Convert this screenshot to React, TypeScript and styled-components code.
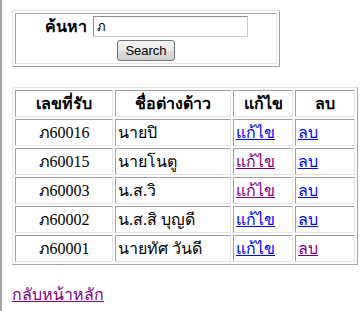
import React from 'react';
import styled, { createGlobalStyle } from 'styled-components';

interface IRow {
  code: string;
  name: string;
  editVisited?: boolean;
  deleteVisited?: boolean;
}

const rows: IRow[] = [
  { code: 'ภ60016', name: 'นายปิ' },
  { code: 'ภ60015', name: 'นายโนตู', editVisited: true },
  { code: 'ภ60003', name: 'น.ส.วิ', editVisited: true },
  { code: 'ภ60002', name: 'น.ส.สิ บุญดี' },
  { code: 'ภ60001', name: 'นายทัศ วันดี', deleteVisited: true },
];

const App = () => {
  return (
    <>
      <GlobalStyle />
      <Page>
        <SearchTable>
          <tbody>
            <tr>
              <SearchCell>
                <SearchLine>
                  <SearchLabel>ค้นหา</SearchLabel>
                  <SearchInput defaultValue='ภ' />
                </SearchLine>
                <SearchButton type='button'>Search</SearchButton>
              </SearchCell>
            </tr>
          </tbody>
        </SearchTable>

        <ListTable>
          <colgroup>
            <col style={{ width: 98 }} />
            <col style={{ width: 116 }} />
            <col style={{ width: 60 }} />
            <col style={{ width: 60 }} />
          </colgroup>
          <tbody>
            <tr>
              <HeadCell>เลขที่รับ</HeadCell>
              <HeadCell>ชื่อต่างด้าว</HeadCell>
              <HeadCell>แก้ไข</HeadCell>
              <HeadCell>ลบ</HeadCell>
            </tr>
            {rows.map((row) => (
              <tr key={row.code}>
                <Cell center>{row.code}</Cell>
                <Cell>{row.name}</Cell>
                <Cell>
                  <Link href='#' visited={row.editVisited}>แก้ไข</Link>
                </Cell>
                <Cell>
                  <Link href='#' visited={row.deleteVisited}>ลบ</Link>
                </Cell>
              </tr>
            ))}
          </tbody>
        </ListTable>

        <BackLink href='#' visited>กลับหน้าหลัก</BackLink>
      </Page>
    </>
  );
};

const GlobalStyle = createGlobalStyle`
  html, body {
    margin: 0;
    background: #ffffff;
  }
  body {
    font-family: "Liberation Serif", "DejaVu Serif", serif;
    font-size: 16px;
    line-height: 19px;
    color: #000000;
  }
`;

const Page = styled.div`
  display: flex;
  flex-direction: column;
  align-items: flex-start;
  height: 311px;
  overflow: hidden;
  box-sizing: border-box;
  border-left: 2px solid #a6a6a6;
  padding: 10px 0 0 10px;
`;

const SearchTable = styled.table`
  width: 268px;
  border-collapse: separate;
  border-spacing: 2px;
  border: 1px solid;
  border-color: #e4e4e4 #a0a0a0 #a0a0a0 #e4e4e4;
`;

const SearchCell = styled.td`
  height: 51px;
  box-sizing: border-box;
  padding: 2px 1px 1px;
  border: 1px solid;
  border-color: #a0a0a0 #e4e4e4 #e4e4e4 #a0a0a0;
  text-align: center;
  vertical-align: top;
`;

const SearchLine = styled.div`
  display: flex;
  justify-content: center;
  align-items: center;
  gap: 6px;
  height: 21px;
  margin-bottom: 3px;
`;

const SearchLabel = styled.span`
  font-family: Tahoma, "DejaVu Sans", sans-serif;
  font-weight: bold;
  font-size: 16px;
  line-height: 21px;
`;

const SearchInput = styled.input`
  width: 155px;
  height: 21px;
  box-sizing: border-box;
  border: 1px solid;
  border-color: #8c8c8c #c8c8c8 #c8c8c8 #8c8c8c;
  padding: 1px 3px;
  font-family: "Liberation Sans", Arial, sans-serif;
  font-size: 13px;
  outline: none;
`;

const SearchButton = styled.button`
  display: block;
  margin: 0 auto;
  width: 58px;
  height: 21px;
  box-sizing: border-box;
  border: 1px solid #707070;
  border-radius: 3px;
  background: linear-gradient(#f2f2f2 0%, #ebebeb 50%, #dddddd 51%, #cfcfcf 100%);
  font-family: "Liberation Sans", Arial, sans-serif;
  font-size: 13px;
  line-height: 19px;
  color: #000000;
  padding: 0;
`;

const ListTable = styled.table`
  margin-top: 20px;
  width: 346px;
  table-layout: fixed;
  border-collapse: separate;
  border-spacing: 2px;
  border: 1px solid;
  border-color: #e4e4e4 #a0a0a0 #a0a0a0 #e4e4e4;
`;

const HeadCell = styled.th`
  height: 27px;
  box-sizing: border-box;
  padding: 1px;
  border: 1px solid;
  border-color: #a0a0a0 #e4e4e4 #e4e4e4 #a0a0a0;
  font-family: Tahoma, "DejaVu Sans", sans-serif;
  font-weight: bold;
  font-size: 16px;
  line-height: 19px;
  text-align: center;
`;

const Cell = styled.td<{ center?: boolean }>`
  height: 27px;
  box-sizing: border-box;
  padding: 1px 2px;
  border: 1px solid;
  border-color: #a0a0a0 #e4e4e4 #e4e4e4 #a0a0a0;
  line-height: 19px;
  text-align: ${({ center }) => (center ? 'center' : 'left')};
  white-space: nowrap;
`;

const Link = styled.a<{ visited?: boolean }>`
  color: ${({ visited }) => (visited ? '#800080' : '#0000ff')};
  text-decoration: underline;
`;

const BackLink = styled(Link)`
  margin-top: 20px;
  line-height: 19px;
`;

export default App;
